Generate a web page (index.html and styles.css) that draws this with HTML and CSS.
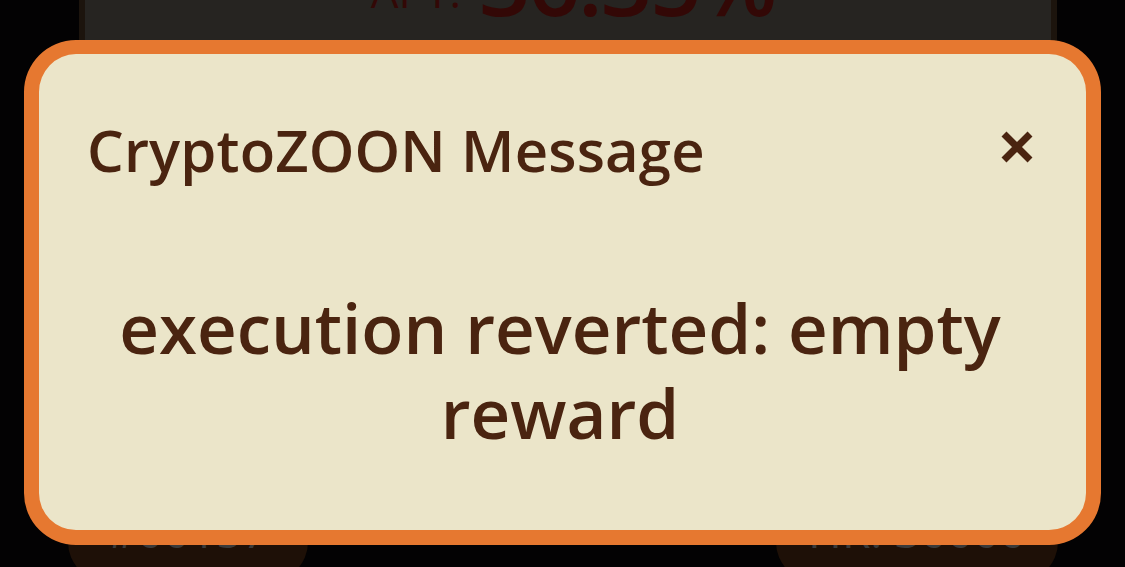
FILE: index.html
```html
<!DOCTYPE html>
<html>
<head>
<meta charset="utf-8">
<link rel="stylesheet" href="styles.css">
</head>
<body>
<div class="screen">
  <div class="scene">
    <div class="apy-card">
      <span class="apy-label">APY:</span><span class="apy-value">36.35%</span>
    </div>
    <div class="pills">
      <div class="pill pill-left">#00157</div>
      <div class="pill pill-right">HR: 30000</div>
    </div>
  </div>
  <div class="modal">
    <div class="modal-inner">
      <div class="modal-head">
        <h2 class="modal-title">CryptoZOON Message</h2>
        <button class="modal-close" aria-label="close">
          <svg width="32" height="32" viewBox="0 0 32 32"><path d="M3 3 L29 29 M29 3 L3 29" stroke="#4a2410" stroke-width="7" fill="none"/></svg>
        </button>
      </div>
      <p class="modal-text">execution reverted: empty reward</p>
    </div>
  </div>
</div>
</body>
</html>
```
FILE: styles.css
```css
html, body {
  margin: 0;
  padding: 0;
  background: #000;
}
.screen {
  position: relative;
  width: 1125px;
  height: 567px;
  overflow: hidden;
  background: #030203;
  font-family: "Open Sans", "Noto Sans", sans-serif;
}
.scene {
  display: flex;
  flex-direction: column;
  justify-content: space-between;
  height: 567px;
}
.apy-card {
  margin: -60px 68px 0 79px;
  height: 120px;
  background: #262421;
  box-shadow: inset 6px 0 0 #1c140d, inset -6px 0 0 #1c140d;
  display: flex;
  align-items: flex-end;
  justify-content: center;
  padding-bottom: 43px;
  box-sizing: border-box;
  color: #330806;
  gap: 18px;
}
.apy-label {
  font-size: 44px;
  font-weight: 500;
  line-height: 1;
  margin-bottom: 4px;
  margin-left: 10px;
}
.apy-value {
  font-size: 90px;
  font-weight: 600;
  line-height: 0.8;
  letter-spacing: -2px;
}
.pills {
  display: flex;
  justify-content: space-between;
  padding: 0 67px 0 68px;
  height: 60px;
}
.pill {
  background: #1e1007;
  color: #3a3a3a;
  font-size: 46px;
  line-height: 1;
  padding-top: 0;
  box-sizing: border-box;
  border-radius: 0 0 40px 40px;
  height: 75px;
  text-align: center;
}
.pill-left { width: 240px; }
.pill-right { width: 282px; }

.modal {
  position: absolute;
  left: 24px;
  top: 40px;
  width: 1077px;
  height: 505px;
  box-sizing: border-box;
  border: 15px solid #e67830;
  border-top-width: 14px;
  border-radius: 52px;
  background: #ebe5c9;
  overflow: hidden;
}
.modal-inner {
  padding: 61px 53px 0 48px;
  display: flex;
  flex-direction: column;
}
.modal-head {
  display: flex;
  justify-content: space-between;
  align-items: center;
}
.modal-title {
  margin: 0;
  font-size: 58px;
  font-weight: 600;
  color: #4a2410;
  line-height: 70px;
  letter-spacing: 0.15px;
}
.modal-close {
  background: none;
  border: 0;
  padding: 0;
  margin: -6px 0 0 0;
  width: 32px;
  height: 32px;
  display: flex;
}
.modal-text {
  margin: 100px 0 0;
  text-align: center;
  font-size: 69px;
  font-weight: 600;
  line-height: 85px;
  color: #4a2410;
}
```
